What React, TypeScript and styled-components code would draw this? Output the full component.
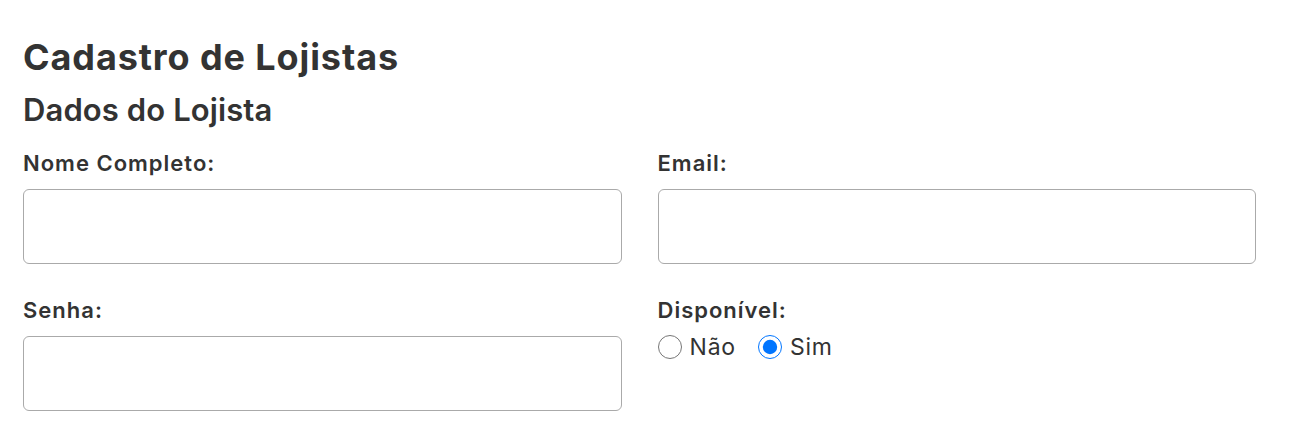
import React from "react";
import styled, { createGlobalStyle } from "styled-components";

const GlobalStyle = createGlobalStyle`
  body {
    margin: 0;
    background: #ffffff;
    font-family: Inter, "Open Sans", sans-serif;
    color: #333333;
  }
`;

const Page = styled.div`
  padding: 35px 34px 20px 23px;
`;

const Title = styled.h1`
  margin: 0;
  font-size: 36px;
  font-weight: 700;
  line-height: 44px;
  letter-spacing: 0.9px;
`;

const SectionTitle = styled.h2`
  margin: 12px 0 0;
  font-size: 31px;
  font-weight: 600;
  line-height: 38px;
  letter-spacing: 0.1px;
`;

const FormGrid = styled.div`
  display: grid;
  grid-template-columns: 1fr 1fr;
  column-gap: 36px;
  row-gap: 33px;
  margin-top: 21px;
`;

const Field = styled.div`
  display: flex;
  flex-direction: column;
`;

const Label = styled.label`
  font-size: 22px;
  font-weight: 600;
  line-height: 27px;
  letter-spacing: 1px;
  margin-bottom: 12px;
`;

const TextInput = styled.input`
  box-sizing: border-box;
  height: 75px;
  width: 100%;
  border: 1px solid #aaaaaa;
  border-radius: 6px;
  padding: 0 12px;
  font-size: 18px;
  font-family: inherit;
  outline: none;
`;

const RadioGroup = styled.div`
  display: flex;
  align-items: center;
  gap: 22px;
  margin-top: -4px;
`;

const RadioOption = styled.label`
  display: flex;
  align-items: center;
  gap: 8px;
  font-size: 23px;
  font-weight: 400;
  line-height: 30px;
  letter-spacing: 0.8px;
  cursor: pointer;
`;

const RadioInput = styled.input`
  width: 24px;
  height: 24px;
  margin: 0;
  accent-color: #0075ff;
`;

export default function App() {
  const [available, setAvailable] = React.useState("sim");

  return (
    <>
      <GlobalStyle />
      <Page>
        <Title>Cadastro de Lojistas</Title>
        <SectionTitle>Dados do Lojista</SectionTitle>
        <FormGrid>
          <Field>
            <Label htmlFor="nome">Nome Completo:</Label>
            <TextInput id="nome" type="text" />
          </Field>
          <Field>
            <Label htmlFor="email">Email:</Label>
            <TextInput id="email" type="email" />
          </Field>
          <Field>
            <Label htmlFor="senha">Senha:</Label>
            <TextInput id="senha" type="password" />
          </Field>
          <Field>
            <Label>Disponível:</Label>
            <RadioGroup>
              <RadioOption>
                <RadioInput
                  type="radio"
                  name="disponivel"
                  checked={available === "nao"}
                  onChange={() => setAvailable("nao")}
                />
                Não
              </RadioOption>
              <RadioOption>
                <RadioInput
                  type="radio"
                  name="disponivel"
                  checked={available === "sim"}
                  onChange={() => setAvailable("sim")}
                />
                Sim
              </RadioOption>
            </RadioGroup>
          </Field>
        </FormGrid>
      </Page>
    </>
  );
}
